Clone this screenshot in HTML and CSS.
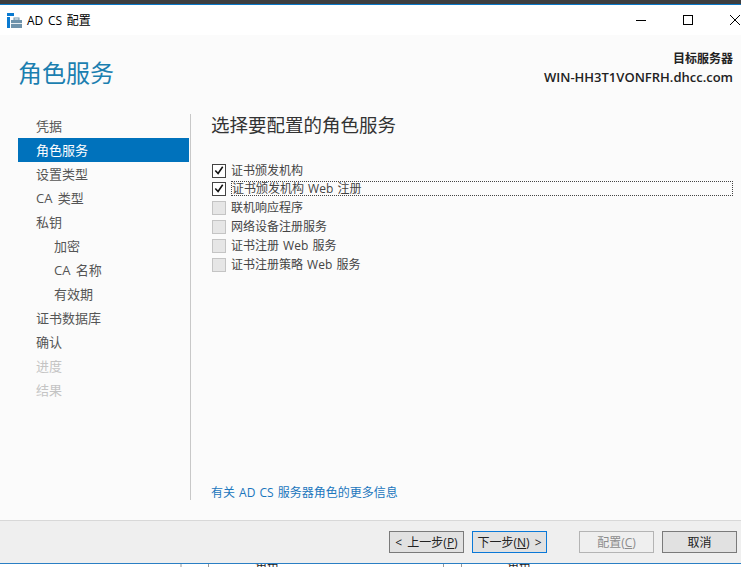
FILE: index.html
```html
<!DOCTYPE html>
<html lang="zh-CN">
<head>
<meta charset="utf-8">
<title>AD CS 配置</title>
<link rel="stylesheet" href="styles.css">
</head>
<body>
<div class="window">
  <header class="titlebar">
    <svg class="app-icon" width="15" height="15" viewBox="0 0 15 15">
      <rect x="0" y="0" width="7" height="3" fill="#0a7ad1"/>
      <rect x="0" y="4" width="3" height="11" fill="#0a7ad1"/>
      <rect x="4" y="7" width="11" height="8" fill="#6f93ab"/>
      <rect x="4" y="10" width="11" height="1" fill="#e8eef2"/>
      <rect x="7" y="5" width="5" height="2" fill="none" stroke="#6f93ab" stroke-width="1"/>
    </svg>
    <span class="title-text">AD CS 配置</span>
    <div class="controls">
      <svg width="12" height="12" viewBox="0 0 12 12"><path d="M1 6.5h10" stroke="#000" stroke-width="1"/></svg>
      <svg width="12" height="12" viewBox="0 0 12 12"><rect x="1.5" y="1.5" width="9" height="9" fill="none" stroke="#000"/></svg>
      <svg width="12" height="12" viewBox="0 0 12 12"><path d="M1 1l10 10M11 1L1 11" stroke="#000" stroke-width="1"/></svg>
    </div>
  </header>
  <div class="head">
    <h1>角色服务</h1>
    <div class="server">
      <div>目标服务器</div>
      <div class="host">WIN-HH3T1VONFRH.dhcc.com</div>
    </div>
  </div>
  <main class="body">
    <nav class="nav">
      <a>凭据</a>
      <a class="active">角色服务</a>
      <a>设置类型</a>
      <a>CA 类型</a>
      <a>私钥</a>
      <a class="sub">加密</a>
      <a class="sub">CA 名称</a>
      <a class="sub">有效期</a>
      <a>证书数据库</a>
      <a>确认</a>
      <a class="off">进度</a>
      <a class="off">结果</a>
    </nav>
    <section class="pane">
      <h2>选择要配置的角色服务</h2>
      <ul class="roles">
        <li><span class="box on"><svg width="13" height="13" viewBox="0 0 13 13"><path d="M2.5 6.5l3 3.2 5-7.2" fill="none" stroke="#111" stroke-width="1.7"/></svg></span><span class="lbl">证书颁发机构</span></li>
        <li class="focus"><span class="box on"><svg width="13" height="13" viewBox="0 0 13 13"><path d="M2.5 6.5l3 3.2 5-7.2" fill="none" stroke="#111" stroke-width="1.7"/></svg></span><span class="lbl">证书颁发机构 Web 注册</span></li>
        <li><span class="box"></span><span class="lbl">联机响应程序</span></li>
        <li><span class="box"></span><span class="lbl">网络设备注册服务</span></li>
        <li><span class="box"></span><span class="lbl">证书注册 Web 服务</span></li>
        <li><span class="box"></span><span class="lbl">证书注册策略 Web 服务</span></li>
      </ul>
      <a class="more">有关 AD CS 服务器角色的更多信息</a>
    </section>
  </main>
  <footer class="foot">
    <button class="btn">&lt; 上一步(<u>P</u>)</button>
    <button class="btn primary">下一步(<u>N</u>) &gt;</button>
    <button class="btn disabled">配置(<u>C</u>)</button>
    <button class="btn">取消</button>
  </footer>
</div>
<div class="behind">
  <span class="col c1"></span><span class="col c2"></span>
  <span class="cap cap1">角色</span>
  <span class="col c3"></span><span class="col c4"></span>
  <span class="cap cap2">角色</span>
</div>
</body>
</html>
```
FILE: styles.css
```css
* { box-sizing: border-box; }
html, body { margin: 0; padding: 0; }
body {
  width: 741px; height: 567px; overflow: hidden; background: #fff;
  font-family: "Open Sans", "Noto Sans CJK SC", sans-serif;
  font-size: 12px; color: #333; word-spacing: 1px;
  display: flex; flex-direction: column;
  border-top: 4px solid #3e3e40;
}
.window { height: 560px; display: flex; flex-direction: column; border-top: 1px solid #0a78c8; border-bottom: 1px solid #2a7fc4; flex: none; }
.titlebar { height: 30px; flex: none; background: #fff; display: flex; align-items: center; padding-left: 7px; color: #000; }
.app-icon { flex: none; margin-right: 5px; }
.title-text { font-size: 12px; word-spacing: 1.5px; }
.controls { margin-left: auto; display: flex; gap: 35px; margin-right: 0; }
.head { height: 76px; flex: none; background: #fbfbfb; display: flex; justify-content: space-between; padding: 0 8px 0 18px; }
h1 { margin: 20px 0 0; font-size: 24px; font-weight: 400; line-height: 36px; color: #1b7fb0; }
.server { margin-top: 14px; text-align: right; font-size: 12px; line-height: 19px; font-weight: 600; color: #222; }
.host { font-size: 13px; }
.body { flex: 1; min-height: 0; background: #fbfbfb; display: flex; padding: 3px 0 20px 18px; }
.nav { width: 171px; flex: none; display: flex; flex-direction: column; }
.nav a { height: 24px; line-height: 24px; padding-left: 18px; font-size: 13px; color: #555; word-spacing: 2px; }
.nav a.active { background: #0072bc; color: #fff; }
.nav a.sub { padding-left: 36px; }
.nav a.off { color: #c4c4c4; }
.pane { flex: 1; min-width: 0; margin-left: 1px; border-left: 1px solid #c8c8c8; padding-left: 20px; display: flex; flex-direction: column; }
h2 { margin: -2px 0 0; font-size: 18.5px; font-weight: 400; line-height: 26px; color: #333; }
.roles { list-style: none; margin: 24px 0 0; padding: 0 0 0 1px; }
.roles li { height: 19px; display: flex; align-items: center; font-size: 12px; color: #444; }
.roles li:first-child { height: 17px; }
.box { width: 14px; height: 14px; flex: none; border: 1px solid #c4c4c4; background: #e6e6e6; margin-right: 5px; display: flex; align-items: center; justify-content: center; }
.box.on { border-color: #444; background: #fff; }
.lbl { line-height: 16px; }
.focus .lbl { flex: 1; border: 1px dotted #444; margin-right: 8px; padding-left: 0; line-height: 13px; }
.more { margin-top: auto; margin-bottom: -1px; font-size: 12px; color: #1a76bd; line-height: 16px; }
.foot { height: 43px; flex: none; background: #efefef; border-top: 1px solid #d8d8d8; display: flex; align-items: center; padding-left: 389px; }
.btn { flex: none; width: 75px; height: 22px; padding: 1px 0 0; font: inherit; font-size: 12px; color: #222; background: #e1e1e1; border: 1px solid #7a7a7a; margin-right: 8px; line-height: 18px; word-spacing: 2px; }
.btn.primary { border-color: #0a78d7; margin-right: 32px; }
.btn.disabled { background: #efefef; border-color: #b4b4b4; color: #8c8c8c; margin-right: 8px; }
.behind { position: relative; flex: 1; background: #fff; overflow: hidden; }
.col { position: absolute; top: 0; bottom: 0; width: 1px; background: #999; }
.c1 { left: 180px; width: 2px; background: #ccc; } .c2 { left: 208px; } .c3 { left: 443px; } .c4 { left: 461px; }
.cap { position: absolute; top: -5px; font-size: 12px; line-height: 16px; color: #222; }
.cap1 { left: 255px; } .cap2 { left: 507px; }
```
